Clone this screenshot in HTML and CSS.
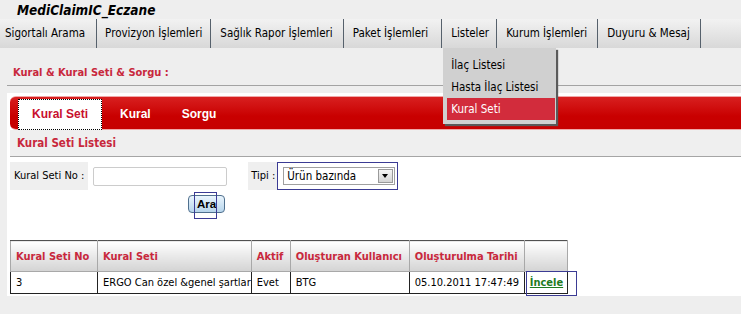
FILE: index.html
```html
<!DOCTYPE html>
<html lang="tr">
<head>
    <meta charset="UTF-8">
    <title>MediClaimIC_Eczane</title>
    <link rel="stylesheet" href="styles.css">
</head>
<body>
    <div class="app-title">MediClaimIC_Eczane</div>

    <ul class="menu">
        <li class="first">Sigortalı Arama</li>
        <li>Provizyon İşlemleri</li>
        <li class="wide">Sağlık Rapor İşlemleri</li>
        <li class="wider">Paket İşlemleri</li>
        <li class="open">Listeler
            <ul class="submenu">
                <li>İlaç Listesi</li>
                <li>Hasta İlaç Listesi</li>
                <li class="active">Kural Seti</li>
            </ul>
        </li>
        <li class="mid">Kurum İşlemleri</li>
        <li class="mid">Duyuru &amp; Mesaj</li>
    </ul>

    <div class="page-head">Kural &amp; Kural Seti &amp; Sorgu :</div>

    <div class="panel">
        <div class="tabs">
            <a class="tab selected">Kural Seti</a>
            <a class="tab">Kural</a>
            <a class="tab">Sorgu</a>
        </div>

        <div class="section-title">Kural Seti Listesi</div>

        <div class="filter">
            <span class="lbl lbl-no">Kural Seti No :</span>
            <input type="text" class="txt">
            <span class="lbl lbl-tip">Tipi :</span>
            <span class="focus-box">
                <span class="select">Ürün bazında<span class="arrow"></span></span>
            </span>
        </div>

        <div class="actions">
            <button class="btn">Ara<span class="focus-mark"></span></button>
        </div>

        <table class="grid">
            <thead>
                <tr>
                    <th class="c1">Kural Seti No</th>
                    <th class="c2">Kural Seti</th>
                    <th class="c3">Aktif</th>
                    <th class="c4">Oluşturan Kullanıcı</th>
                    <th class="c5">Oluşturulma Tarihi</th>
                    <th class="c6"></th>
                </tr>
            </thead>
            <tbody>
                <tr>
                    <td>3</td>
                    <td>ERGO Can özel &amp;genel şartlar</td>
                    <td>Evet</td>
                    <td>BTG</td>
                    <td>05.10.2011 17:47:49</td>
                    <td><a class="link" href="#">İncele<span class="focus-mark"></span></a></td>
                </tr>
            </tbody>
        </table>
    </div>
</body>
</html>
```

FILE: styles.css
```css
body {
    margin: 0;
    background-color: #eeeeee;
    font-family: "DejaVu Sans Condensed", "DejaVu Sans", sans-serif;
    font-stretch: condensed;
    font-size: 11px;
    color: #000;
    overflow: hidden;
}

.app-title {
    height: 19px;
    line-height: 20px;
    padding-left: 17px;
    font-weight: bold;
    font-style: italic;
    font-size: 13.5px;
}

/* top menu */
.menu {
    list-style: none;
    margin: 0;
    padding: 0;
    display: flex;
    height: 29px;
    background: linear-gradient(#f2f2f2, #d8d8d8);
}

.menu > li {
    position: relative;
    line-height: 29px;
    padding: 0 8px;
    font-size: 11.5px;
    border-right: 1px solid #56616c;
    white-space: nowrap;
}

.menu > li.first {
    padding-left: 5px;
    padding-right: 11px;
}

.menu > li.wide {
    padding: 0 10px 0 9px;
}

.menu > li.wider {
    padding: 0 13px 0 9px;
}

.menu > li.open {
    padding: 0 7px 0 9px;
}

.menu > li.mid {
    padding: 0 10px 0 9px;
}

.submenu {
    list-style: none;
    position: absolute;
    top: 29px;
    left: 1px;
    width: 108px;
    margin: 0;
    padding: 6px 1px 4px 4px;
    background: #d0d0d0;
    box-shadow: 2px 2px 1px #5a5a5a;
    z-index: 5;
}

.submenu li {
    line-height: 22px;
    padding-left: 4px;
    font-size: 11.5px;
}

.submenu li.active {
    background: #d22c3c;
    color: #fff;
}

/* page heading */
.page-head {
    margin-left: 7px;
    padding: 18px 0 5px 6px;
    line-height: 14px;
    color: #c8283c;
    font-weight: bold;
    font-size: 11px;
    border-bottom: 1px solid #a3a3a3;
}

.panel {
    margin: 7px 0 0 7px;
    padding: 3px 0 2px 3px;
    background: #fff;
}

/* red tab strip */
.tabs {
    display: flex;
    align-items: flex-end;
    height: 32px;
    padding-left: 8px;
    border-top: 1px solid #f0a8a8;
    border-bottom: 1px solid #f0a8a8;
    border-radius: 6px 0 0 6px;
    background: linear-gradient(#d82020, #c90000 60%, #c60000);
}

.tab {
    height: 31px;
    line-height: 31px;
    margin-bottom: -1px;
    margin-right: 5px;
    padding: 0 13px;
    font-family: "Liberation Sans", Arial, sans-serif;
    font-weight: bold;
    font-size: 12px;
    color: #fff;
    white-space: nowrap;
    box-sizing: border-box;
}

.tab.selected {
    background: #fff;
    color: #c8102e;
    border: 1px dotted #000;
    line-height: 29px;
}

.section-title {
    height: 26px;
    line-height: 26px;
    padding-left: 7px;
    background: #efefef;
    border-bottom: 1px solid #a5a5a5;
    color: #c8283c;
    font-weight: bold;
    font-size: 11.5px;
}

/* filter form */
.filter {
    display: flex;
    align-items: center;
    margin-top: 5px;
    height: 28px;
}

.lbl {
    height: 28px;
    line-height: 28px;
    background: #efefef;
    font-size: 11px;
    white-space: nowrap;
}

.lbl-no {
    padding: 0 4px;
}

.lbl-tip {
    margin-left: 21px;
    padding: 0 2px 0 3px;
}

.txt {
    margin: 0 0 0 5px;
    padding: 0;
    width: 134px;
    height: 19px;
    border: 1px solid #cccccc;
    border-radius: 2px;
    box-sizing: border-box;
}

.focus-box {
    display: flex;
    align-items: center;
    height: 28px;
    width: 121px;
    box-sizing: border-box;
    border: 1px solid #3b3b94;
    padding-left: 5px;
}

.select {
    position: relative;
    width: 112px;
    height: 18px;
    line-height: 16px;
    padding-left: 3px;
    box-sizing: border-box;
    border: 1px solid #a0a0a0;
    background: #fff;
    font-size: 11.5px;
}

.arrow {
    position: absolute;
    right: 1px;
    top: 1px;
    width: 15px;
    height: 14px;
    box-sizing: border-box;
    border: 1px solid #9a9a9a;
    background: linear-gradient(#f4f4f4, #d4d4d4);
}

.arrow::after {
    content: "";
    position: absolute;
    left: 3px;
    top: 4px;
    border-left: 3.5px solid transparent;
    border-right: 3.5px solid transparent;
    border-top: 4px solid #000;
}

.actions {
    padding-left: 178px;
    margin-top: 5px;
    height: 18px;
}

.btn {
    position: relative;
    height: 18px;
    width: 37px;
    padding: 0;
    border: 1px solid #50708e;
    border-radius: 4px;
    background: linear-gradient(#eaf5fd, #b7d5ec);
    font-family: "Liberation Sans", Arial, sans-serif;
    font-weight: bold;
    font-size: 11.5px;
    color: #000;
}

.btn .focus-mark {
    position: absolute;
    left: 5px;
    top: -4px;
    width: 23px;
    height: 27px;
    box-sizing: border-box;
    border: 1px solid #3b3b94;
}

/* result grid */
.grid {
    margin-top: 27px;
    border-collapse: collapse;
    table-layout: fixed;
}

.grid th {
    height: 30px;
    padding: 0 0 0 5px;
    text-align: left;
    color: #c8283c;
    font-size: 11px;
    background: linear-gradient(#ffffff, #d3d3d3);
    border: 1px solid #a8a8a8;
    border-top-color: #505050;
    white-space: nowrap;
}

.grid td {
    height: 21px;
    padding: 0 0 0 5px;
    border: 1px solid #222;
    font-size: 11px;
    white-space: nowrap;
}

.c1 { width: 81px; }
.c2 { width: 146px; }
.c3 { width: 33px; }
.c4 { width: 113px; }
.c5 { width: 109px; }
.c6 { width: 37px; }

.link {
    position: relative;
    color: #1f7a1f;
    font-weight: bold;
    text-decoration: underline;
}

.link .focus-mark {
    position: absolute;
    left: -4px;
    top: -5px;
    width: 51px;
    height: 25px;
    box-sizing: border-box;
    border: 1px solid #3b3b94;
}
```
